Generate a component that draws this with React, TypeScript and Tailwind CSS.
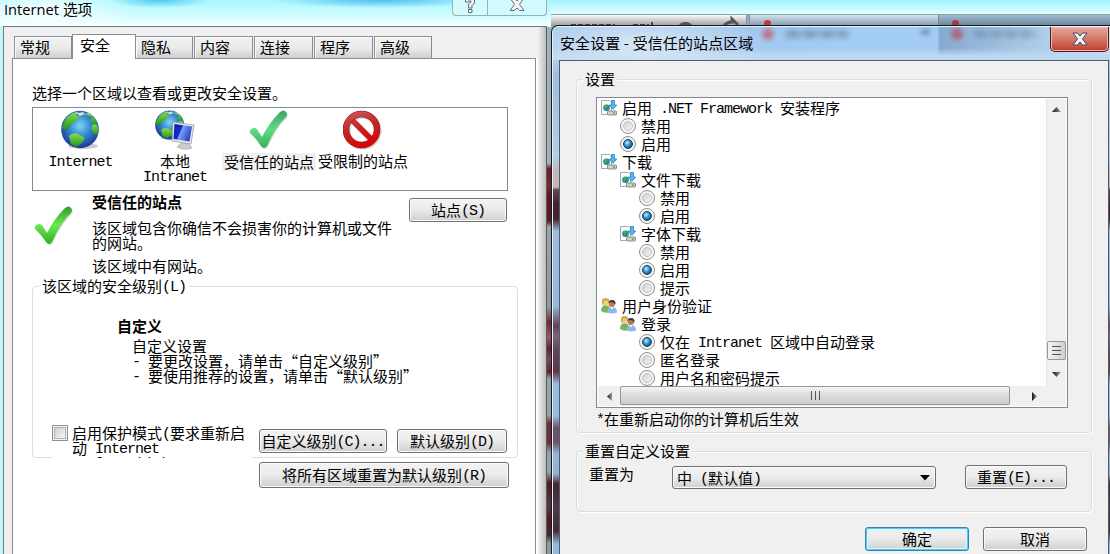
import type { ReactNode } from "react"

const CJK = "font-['Noto_Sans_CJK_SC','Liberation_Sans',sans-serif]"

// Half width characters sit in an 8px cell, full width ones in a 15px cell.
function T({ children }: { children: string }) {
    const parts = children.match(/[\x20-\x7e]+|[^\x20-\x7e]+/g) ?? []
    return (
        <>
            {parts.map((part, i) =>
                /^[\x20-\x7e]/.test(part) ? (
                    <span key={i} className="whitespace-pre align-[1px] font-['Liberation_Mono',monospace] text-[15px] leading-[11px] tracking-[-1px]">{part}</span>
                ) : (
                    <span key={i}>{part}</span>
                )
            )}
        </>
    )
}

function Line({ children, className = "" }: { children: string; className?: string }) {
    return <div className={`h-[15px] shrink-0 whitespace-nowrap leading-[13px] ${className}`}><T>{children}</T></div>
}

function Button({ children, className = "", primary = false }: { children: string; className?: string; primary?: boolean }) {
    return (
        <button
            className={`flex shrink-0 items-center justify-center whitespace-nowrap rounded-[3px] border bg-linear-to-b from-[#f3f3f3] from-0% via-[#ebebeb] via-48% to-[#cfcfcf] pb-px leading-[15px] ${
                primary
                    ? "border-[#3c7fb1] shadow-[inset_0_0_0_1px_#47d0f5,inset_0_0_0_2px_#d8f3fa]"
                    : "border-[#707070] shadow-[inset_0_0_0_1px_#fbfbfb]"
            } ${className}`}>
            <span><T>{children}</T></span>
        </button>
    )
}

function Defs() {
    return (
        <svg width="0" height="0" className="absolute">
            <defs>
                <radialGradient id="sea" cx="0.5" cy="0.4" r="0.6">
                    <stop offset="0" stopColor="#7fd4f4" />
                    <stop offset="0.5" stopColor="#2f86cf" />
                    <stop offset="1" stopColor="#1c3393" />
                </radialGradient>
                <linearGradient id="land" x1="0" y1="0" x2="0" y2="1">
                    <stop offset="0" stopColor="#8edb4a" />
                    <stop offset="1" stopColor="#1c9420" />
                </linearGradient>
                <linearGradient id="screen" x1="0" y1="0" x2="1" y2="0.4">
                    <stop offset="0" stopColor="#0a1fa0" />
                    <stop offset="0.45" stopColor="#1430d0" />
                    <stop offset="0.5" stopColor="#7f9ff5" />
                    <stop offset="1" stopColor="#2b4ad0" />
                </linearGradient>
                <linearGradient id="tick" x1="0" y1="0" x2="0" y2="1">
                    <stop offset="0" stopColor="#2f9e2a" />
                    <stop offset="0.5" stopColor="#6be94f" />
                    <stop offset="1" stopColor="#2fae25" />
                </linearGradient>
                <linearGradient id="tickSelected" x1="0" y1="0" x2="0" y2="1">
                    <stop offset="0" stopColor="#3aa565" />
                    <stop offset="0.5" stopColor="#62da86" />
                    <stop offset="1" stopColor="#36b058" />
                </linearGradient>
                <linearGradient id="stop" gradientUnits="userSpaceOnUse" x1="10" y1="0" x2="22" y2="38">
                    <stop offset="0" stopColor="#cc5858" />
                    <stop offset="0.5" stopColor="#c42222" />
                    <stop offset="1" stopColor="#e00000" />
                </linearGradient>
                <linearGradient id="arrow" x1="0" y1="0" x2="1" y2="0">
                    <stop offset="0" stopColor="#101010" />
                    <stop offset="1" stopColor="#a0a0a0" />
                </linearGradient>
            </defs>
        </svg>
    )
}

function Globe() {
    return (
        <g>
            <ellipse cx="22" cy="36" rx="15" ry="3" fill="#000" opacity="0.2" />
            <circle cx="19" cy="19.5" r="18.8" fill="url(#sea)" />
            <g fill="url(#land)">
                <path d="M3 12 6 7l6-4 5-1-2 3 3 2-4 5-4 2-3 5-3 1-3-2z" />
                <path d="M8 26q4-4 9-2l7 4-3 5-6 4-5-3z" />
                <path d="m23 4 5-1 6 6 3 6-4-1-4-3 2-4z" />
                <path d="m32 14 4 1 1.500 6-2 4-3-1-2-5z" />
            </g>
            <path d="m14 2 4 1 4-1 2 2-5 2z" fill="#e6f4df" opacity="0.85" />
        </g>
    )
}

function ZoneIcon({ kind }: { kind: string }) {
    return (
        <svg width="40" height="40" viewBox="0 0 40 40" className="shrink-0">
            {kind === "internet" && <Globe />}
            {kind === "intranet" && (
                <>
                    <g transform="scale(0.77)"><Globe /></g>
                    <path d="m26 33 8 1 3 4q-8 3-15-1z" fill="#c9ccd0" stroke="#9a9da1" strokeWidth="0.5" />
                    <path d="m18 12 21 3-3 19-19-3z" fill="#e8e8e8" stroke="#9c9c9c" strokeWidth="0.8" />
                    <path d="m19.500 14 17.500 2.500-2.500 15-16-2.500z" fill="url(#screen)" />
                </>
            )}
            {kind === "stop" && (
                <>
                    <circle cx="19.500" cy="20.500" r="15.500" fill="none" stroke="#000" strokeOpacity="0.2" strokeWidth="7" />
                    <path d="m8 9 21 21" stroke="url(#stop)" strokeWidth="6" />
                    <circle cx="18.500" cy="19.500" r="15.500" fill="none" stroke="#8e1616" strokeWidth="6.500" />
                    <circle cx="18.500" cy="19.500" r="15.500" fill="none" stroke="url(#stop)" strokeWidth="5.500" />
                </>
            )}
        </svg>
    )
}

function Check({ selected = false }: { selected?: boolean }) {
    const d = "M1 23q-1-4 4-5 3 0 4 3l4 6Q20 13 31 2q4-3 6 0 2 2 0 5-10 9-19 29-3 4-6 0Q6 27 1 23z"
    return (
        <svg width="40" height="40" viewBox="0 0 40 40" className="shrink-0">
            <path d={d} fill="#000" opacity="0.15" transform="translate(0.8 1)" />
            <path d={d} fill={selected ? "url(#tickSelected)" : "url(#tick)"} />
        </svg>
    )
}

function DownloadIcon() {
    return (
        <svg width="16" height="16" viewBox="0 0 16 16" className="shrink-0">
            <path d="M.5.500h8l2 2v12H.500z" fill="#fff" stroke="#a9a9a9" />
            <circle cx="5.500" cy="7.800" r="3.300" fill="#2377c4" />
            <path d="M3 5.800 6 4.500l1 2-2 2 1 2-2-1zM7 8l2-1-1 3z" fill="#45b635" />
            <path d="M10.500.500h3V5h2.300L12 9.300 8.200 5h2.300z" fill="#55b9f0" stroke="#1b76bd" strokeWidth="0.7" />
            <rect x="6.500" y="11" width="9" height="4" rx="1" fill="#d0d0d0" stroke="#777" strokeWidth="0.8" />
            <path d="M12 13.200h2" stroke="#2fae25" strokeWidth="1.200" />
        </svg>
    )
}

function UsersIcon() {
    return (
        <svg width="16" height="16" viewBox="0 0 16 16" className="shrink-0">
            <path d="M0 13q0-5 4-6l4 1 1 6q-5 2-9-1z" fill="#7ab55c" />
            <circle cx="4.500" cy="4.200" r="3.200" fill="#efc99a" />
            <path d="M1 5Q0 0 4.500 0 9 0 8 4 5 1.500 3 3 3 6 1 7z" fill="#cfae45" />
            <path d="M6.500 14.500q0-5 4.500-5.500 5 0 5 5.500-5 2-9.500 0z" fill="#8db9ea" />
            <path d="m9.500 9 1.500 2.500L12.500 9z" fill="#fff" />
            <circle cx="10.800" cy="5.800" r="3.200" fill="#b9794a" />
            <path d="M7.500 5Q7.500 2 11 2q4 0 3.500 4.500Q13 4 10.500 4 8.500 4 7.500 5z" fill="#3d3530" />
        </svg>
    )
}

function Radio({ on = false }: { on?: boolean }) {
    return (
        <span className="flex size-4 shrink-0 items-center justify-center rounded-full border border-[#8e8f8f] bg-[#f6f6f6]">
            {on ? (
                <span className="size-2.5 rounded-full border border-[#173a5c] bg-radial-[at_40%_35%] from-[#c5f1ff] via-[#2590cb] via-45% to-[#0b3d66]" />
            ) : (
                <span className="size-2.5 rounded-full border border-[#c0c3c7] bg-linear-to-br from-[#cdd0d4] to-[#f6f6f6]" />
            )}
        </span>
    )
}

type Row = { depth: number; icon: "download" | "users" | "on" | "off"; label: string }

const rows: Row[] = [
    { depth: 0, icon: "download", label: "启用 .NET Framework 安装程序" },
    { depth: 1, icon: "off", label: "禁用" },
    { depth: 1, icon: "on", label: "启用" },
    { depth: 0, icon: "download", label: "下载" },
    { depth: 1, icon: "download", label: "文件下载" },
    { depth: 2, icon: "off", label: "禁用" },
    { depth: 2, icon: "on", label: "启用" },
    { depth: 1, icon: "download", label: "字体下载" },
    { depth: 2, icon: "off", label: "禁用" },
    { depth: 2, icon: "on", label: "启用" },
    { depth: 2, icon: "off", label: "提示" },
    { depth: 0, icon: "users", label: "用户身份验证" },
    { depth: 1, icon: "users", label: "登录" },
    { depth: 2, icon: "on", label: "仅在 Intranet 区域中自动登录" },
    { depth: 2, icon: "off", label: "匿名登录" },
    { depth: 2, icon: "off", label: "用户名和密码提示" },
]

const indents = ["pl-[3px]", "pl-[22px]", "pl-[41px]"]

function SettingRow({ depth, icon, label }: Row) {
    return (
        <div className={`flex h-[18px] shrink-0 items-center gap-[5px] ${indents[depth]}`}>
            {icon === "download" && <DownloadIcon />}
            {icon === "users" && <UsersIcon />}
            {icon === "on" && <Radio on />}
            {icon === "off" && <Radio />}
            <Line>{label}</Line>
        </div>
    )
}

function Arrow({ d, className = "" }: { d: string; className?: string }) {
    return (
        <svg width="9" height="9" viewBox="0 0 9 9" className={`shrink-0 ${className}`}>
            <path d={d} fill="url(#arrow)" />
        </svg>
    )
}

function Tab({ children, className = "" }: { children: ReactNode; className?: string }) {
    return (
        <div className={`h-[22px] shrink-0 border border-b-0 border-[#898c95] bg-linear-to-b from-[#f2f2f2] from-0% via-[#ebebeb] via-50% to-[#cfcfcf] pl-[5px] pt-[3px] leading-[13px] shadow-[inset_1px_1px_0_#fcfcfc] ${className}`}>
            {children}
        </div>
    )
}

function InternetOptions() {
    return (
        <div className="absolute left-0 top-0 flex h-[554px] w-[551px] flex-col overflow-hidden bg-linear-to-r from-[#c5f4fb] via-[#b9fbff] to-[#e9ffff]">
            <div className="flex h-[26px] shrink-0 justify-between bg-[radial-gradient(ellipse_90px_26px_at_45px_10px,#ffffffe0,#ffffff00),radial-gradient(ellipse_50px_8px_at_160px_0px,#4fc8ef,#4fc8ef00),radial-gradient(ellipse_110px_8px_at_380px_0px,#50bdf2,#50cdf200),linear-gradient(#a9f7fe,#c9fcff_50%,#f4ffff)] pl-1">
                <div className="h-5 font-['Open_Sans','Noto_Sans_CJK_SC',sans-serif] text-[14.7px] leading-[19px]">Internet 选项</div>
                <div className="mr-[4px] flex h-[16px] w-[95px] overflow-hidden rounded-b-[4px] border border-t-0 border-[#8fb3b8] bg-[#d3fafd]">
                    <div className="flex w-[35px] justify-center border-r border-[#8fb3b8]">
                        <svg width="14" height="14" viewBox="0 0 14 14">
                            <path d="M2.500 2V-2h9v5L9 5.500V8H5.500V4L8 2V1H5.500v1z" fill="#f4f4f4" stroke="#666b78" />
                            <path d="M5.500 9.500H9v3H5.500z" fill="#f4f4f4" stroke="#666b78" />
                        </svg>
                    </div>
                    <div className="flex flex-1 justify-center">
                        <svg width="18" height="14" viewBox="0 0 18 14">
                            <path d="M2-2h4.500L9 1l2.500-3H16L11.500 4.500l4.500 6h-4.500L9 8l-2.500 2.500H2l4.500-6z" fill="#f4f4f4" stroke="#666b78" />
                        </svg>
                    </div>
                </div>
            </div>
            <div className="ml-[3px] flex w-[544px] flex-1 flex-col border border-b-0 border-[#6d7b80] bg-[#f0f0f0] pl-2 pt-2">
                <div className="flex h-[23px] items-end pl-[2px]">
                    <Tab className="w-[58px]"><T>常规</T></Tab>
                    <div className="z-10 -mb-px h-[25px] w-[64px] shrink-0 border border-b-0 border-[#898c95] bg-white pl-[7px] pt-[3px] leading-[14px]">安全</div>
                    <Tab className="w-[57px] border-l-0"><T>隐私</T></Tab>
                    <Tab className="ml-px w-[59px]"><T>内容</T></Tab>
                    <Tab className="ml-px w-[59px]"><T>连接</T></Tab>
                    <Tab className="ml-px w-[59px]"><T>程序</T></Tab>
                    <Tab className="ml-px w-[58px]"><T>高级</T></Tab>
                </div>
                <div className="flex w-[524px] flex-1 flex-col border border-b-0 border-[#898c95] bg-white pl-[19px] pt-[27px] shadow-[2px_0_0_#fff]">
                    <Line>选择一个区域以查看或更改安全设置。</Line>
                    <div className="mt-[6px] flex h-[84px] w-[476px] shrink-0 items-start border border-[#828790] pt-[2px] text-center">
                        <div className="flex w-[95px] flex-col items-center">
                            <ZoneIcon kind="internet" />
                            <Line className="mt-[4px]">Internet</Line>
                        </div>
                        <div className="flex w-[94px] flex-col items-center">
                            <ZoneIcon kind="intranet" />
                            <Line className="mt-[4px]">本地</Line>
                            <Line>Intranet</Line>
                        </div>
                        <div className="flex w-[94px] flex-col items-center">
                            <Check selected />
                            <div className="mt-[3px] flex h-[18px] w-[94px] items-center justify-center bg-[#f0f0f0]"><Line>受信任的站点</Line></div>
                        </div>
                        <div className="flex w-[94px] flex-col items-center">
                            <ZoneIcon kind="stop" />
                            <Line className="mt-[4px]">受限制的站点</Line>
                        </div>
                    </div>
                    <div className="flex h-[83px] shrink-0">
                        <div className="ml-[2px] mt-[15px] w-[58px]"><Check /></div>
                        <div className="flex w-[317px] flex-col pt-1">
                            <Line className="font-bold">受信任的站点</Line>
                            <Line className="mt-[11px]">该区域包含你确信不会损害你的计算机或文件</Line>
                            <Line>的网站。</Line>
                            <Line className="mt-2">该区域中有网站。</Line>
                        </div>
                        <Button className="mt-[7px] h-6 w-[98px]">站点(S)</Button>
                    </div>
                    <fieldset className="mt-[5px] h-[179px] w-[486px] shrink-0 rounded-[4px] border border-[#d5dfe5]">
                        <legend className="ml-[6px] h-[15px] px-[3px] leading-[13px]"><T>该区域的安全级别(L)</T></legend>
                        <div className="flex flex-col pl-[84px] pt-[25px]">
                            <Line className="font-bold">自定义</Line>
                            <div className="mt-[5px] pl-[15px]">
                                <Line>自定义设置</Line>
                                <Line>- 要更改设置，请单击“自定义级别”</Line>
                                <Line>- 要使用推荐的设置，请单击“默认级别”</Line>
                            </div>
                        </div>
                        <div className="flex pl-[19px] pt-[41px]">
                            <div className="flex h-[33px] w-[200px] gap-1 overflow-hidden bg-white">
                                <span className="flex size-4 shrink-0 items-center justify-center border border-[#8e8f8f] bg-[#f4f4f4]">
                                    <span className="size-3 border border-[#aeb3b9] bg-linear-to-br from-[#cbcfd5] to-[#f6f6f6]" />
                                </span>
                                <div className="pt-px">
                                    <Line>启用保护模式(要求重新启</Line>
                                    <Line>动 Internet</Line>
                                    <Line>Explorer)(P)</Line>
                                </div>
                            </div>
                            <Button className="ml-[7px] mt-1 h-6 w-[128px]">自定义级别(C)...</Button>
                            <Button className="ml-[10px] mt-1 h-6 w-[110px]">默认级别(D)</Button>
                        </div>
                    </fieldset>
                    <Button className="ml-[227px] mt-1 h-[26px] w-[250px]">将所有区域重置为默认级别(R)</Button>
                </div>
            </div>
            {/* shadow cast by the dialog on the right */}
            <div className="absolute right-0 top-[27px] h-[527px] w-[13px] bg-linear-to-r from-transparent to-black/35" />
            <div className="absolute right-0 top-[27px] h-[527px] w-[4px] bg-[linear-gradient(#9fb4b8_0,#a5b0b4_136px,#650c10_142px,#75181c_160px,#550709_168px,#550709_194px,#9ca3a6_200px,#8c9498_280px,#701820_295px,#905058_310px,#601018_322px,#704048_332px,#601018_345px,#95a0a5_352px,#95a0a5_388px,#6a2028_396px,#6a2028_416px,#95a0a5_426px,#95a0a5_445px,#520608_456px,#403038_480px,#520608_490px,#3a1518_508px,#8c9498_516px)] opacity-90" />
        </div>
    )
}

function SecuritySettings() {
    return (
        <div className="absolute left-[551px] top-[25px] h-[529px] w-[559px] overflow-hidden rounded-tl-[7px] border border-b-0 border-r-0 border-[#15181d] bg-[linear-gradient(#b7d1ec_0,#b2cbe6_36px,#9fbedb_50px,#b5cde6_130px,#c5b4bd_144px,#c9b3b5_161px,#604554_164px,#47222e_178px,#47222e_193px,#9dbcdf_205px,#98b7db_280px,#684050_300px,#806478_310px,#624552_325px,#62354a_346px,#9ab9de_358px,#9ab9de_390px,#6d5365_402px,#6d5365_416px,#97b6da_428px,#94b0d2_448px,#452530_458px,#503848_482px,#452a38_505px,#97b8df_518px)] shadow-[inset_1px_1px_0_#e5f2ff]">
            <div className="flex h-[34px] items-start justify-between bg-[radial-gradient(ellipse_130px_30px_at_90px_18px,#dce9f6,#dce9f600),linear-gradient(#c9e0f700_22px,#bfd8f2_30px),linear-gradient(90deg,#a9c9eb,#a0c6ee_35%,#a3cdf5_50%,#a3cdf5_69%,#86aace_69.5%,#a8c8e6_85%,#cfe0f2)] bg-clip-content pl-px pt-px">
                <div className={`whitespace-pre pl-[7px] pt-[6px] leading-5 tracking-[0.1px] ${CJK}`}>安全设置 - 受信任的站点区域</div>
                <div className="relative flex gap-[14px]">
                    {/* blurred tabs seen through the glass */}
                    <svg width="350" height="31" viewBox="0 0 350 31" className="absolute -left-[350px] top-0">
                        <g opacity="0.7">
                            <circle cx="68" cy="7" r="6" fill="#c15c69" className="blur-[2px]" />
                            <path d="M86 7h62" stroke="#5d7488" strokeWidth="6" strokeDasharray="14 3" className="blur-[3px]" />
                            <path d="M221 5h9" stroke="#6b8499" strokeWidth="6" className="blur-[2px]" />
                            <circle cx="257" cy="7" r="6" fill="#b05060" className="blur-[2px]" />
                            <path d="M275 7h62" stroke="#68829c" strokeWidth="6" strokeDasharray="12 3" className="blur-[3px]" />
                        </g>
                    </svg>
                    <button className="mr-px flex h-[25px] w-[59px] items-center justify-center rounded-b-[5px] border border-t-0 border-[#4d1a1a] bg-linear-to-b from-[#e5a99d] from-0% via-[#d2796b] via-48% to-[#c03a24] shadow-[inset_0_0_0_1px_#efb9ae]">
                        <svg width="16" height="14" viewBox="0 0 16 14">
                            <path d="M1 1h4.500L8 4l2.500-3H15L10.500 7l4.500 6h-4.500L8 10l-2.500 3H1l4.500-6z" fill="#f5f5f5" stroke="#444a63" />
                        </svg>
                    </button>
                </div>
            </div>
            <div className="ml-[7px] h-[495px] w-[550px] border border-b-0 border-[#4b5c6e] bg-[#f0f0f0] pl-4 pt-[11px]">
                <fieldset className="h-[361px] w-[516px] rounded-[4px] border border-[#d5dfe5] shadow-[inset_1px_1px_0_#fff,1px_1px_0_#fff]">
                    <legend className="ml-[6px] h-[15px] bg-[#f0f0f0] px-[2px] leading-[14px]">设置</legend>
                    <div className="ml-[19px] mt-[10px] flex h-[311px] w-[472px] flex-col border border-[#828790] bg-white p-px">
                        <div className="flex h-[287px] shrink-0">
                            <div className="flex-1 overflow-hidden">
                                {rows.map((row, i) => <SettingRow key={i} {...row} />)}
                            </div>
                            <div className="flex w-[20px] shrink-0 flex-col items-center border-l border-[#e6e6e6] bg-[#f0f0f0]">
                                <Arrow d="M0 7 4.500 2 9 7z" className="mt-[6px]" />
                                <div className="mt-[227px] flex h-[19px] w-[19px] shrink-0 flex-col items-center justify-center gap-[3px] rounded-[2px] border border-[#979797] bg-linear-to-r from-[#f5f5f5] to-[#cfcfcf]">
                                    <span className="h-px w-[9px] bg-[#555]" />
                                    <span className="h-px w-[9px] bg-[#555]" />
                                    <span className="h-px w-[9px] bg-[#555]" />
                                </div>
                                <Arrow d="M0 2 4.500 7 9 2z" className="mt-[10px]" />
                            </div>
                        </div>
                        <div className="flex h-5 shrink-0 bg-[#f0f0f0]">
                            <div className="flex w-[22px] items-center justify-center"><Arrow d="M7 0 2 4.500 7 9z" /></div>
                            <div className="flex h-[19px] w-[390px] items-center justify-center gap-[3px] rounded-[2px] border border-[#979797] bg-linear-to-b from-[#f5f5f5] via-[#dcdcdc] to-[#cdcdd0]">
                                <span className="h-[9px] w-px bg-[#555]" />
                                <span className="h-[9px] w-px bg-[#555]" />
                                <span className="h-[9px] w-px bg-[#555]" />
                            </div>
                            <div className="flex w-12 items-center justify-center"><Arrow d="M2 0 7 4.500 2 9z" /></div>
                        </div>
                    </div>
                    <Line className="ml-[19px] mt-1">*在重新启动你的计算机后生效</Line>
                </fieldset>
                <fieldset className="mt-[11px] h-[68px] w-[516px] rounded-[4px] border border-[#d5dfe5] shadow-[inset_1px_1px_0_#fff,1px_1px_0_#fff]">
                    <legend className="ml-[6px] h-[15px] bg-[#f0f0f0] px-[2px] leading-[13px]">重置自定义设置</legend>
                    <div className="flex items-start pl-[12px] pt-[6px]">
                        <Line className="mt-[2px] w-[83px]">重置为</Line>
                        <button className="mt-px flex h-[23px] w-[264px] items-center justify-between rounded-[3px] border border-[#707070] bg-linear-to-b from-[#f3f3f3] via-[#ebebeb] to-[#cfcfcf] pl-1 pr-[5px] leading-[13px] shadow-[inset_0_0_0_1px_#fbfbfb]">
                            <span><T>中 (默认值)</T></span>
                            <svg width="10" height="6" viewBox="0 0 10 6"><path d="M0 0h10L5 5.500z" fill="#000" /></svg>
                        </button>
                        <Button className="ml-[29px] h-6 w-[102px]">重置(E)...</Button>
                    </div>
                </fieldset>
                <div className="mt-[15px] flex gap-[14px] pl-[289px]">
                    <Button primary className="h-6 w-[104px]">确定</Button>
                    <Button className="h-6 w-[104px]">取消</Button>
                </div>
            </div>
        </div>
    )
}

// The browser window that shows above the dialogs
function Browser() {
    return (
        <div className="flex h-[120px] flex-col pl-[551px]">
            <div className="h-[14px] shrink-0 bg-linear-to-b from-[#a0f2ff] to-[#dfffff]" />
            <div className="flex h-3 shrink-0 overflow-hidden border-t border-[#91a3a8] bg-[#8fb0c8]">
                <div className="flex h-3 w-[196px] items-start border-r border-[#848e98] bg-linear-to-b from-[#fafafa] to-[#959595] pl-5">
                    <svg width="170" height="12" viewBox="0 0 170 12">
                        <path d="M0 10h44M62 10h16M81 7v4" stroke="#444" strokeWidth="2" strokeDasharray="5 2" />
                        <path d="M108 13a7 7 0 0 1 13 0M152 13q2-6 9-6V4l6 6" fill="none" stroke="#555" strokeWidth="3" />
                    </svg>
                </div>
                <div className="ml-[2px] flex w-[189px] justify-start border-l border-[#848e98] bg-linear-to-b from-[#d4e2ef] to-[#809aae] pl-[14px] pt-[5px]">
                    <span className="size-[7px] rounded-full bg-[#c23939]" />
                </div>
                <div className="flex flex-1 justify-start border-l border-[#76889a] bg-linear-to-b from-[#9dbad0] to-[#6b8497] pl-[13px] pt-[5px]">
                    <span className="size-[7px] rounded-full bg-[#a83740]" />
                </div>
            </div>
        </div>
    )
}

export default function App() {
    return (
        <div className={`relative h-[554px] w-[1110px] overflow-hidden bg-[#8fafc8] text-[15px] leading-[15px] text-black ${CJK}`}>
            <Defs />
            <Browser />
            <InternetOptions />
            <SecuritySettings />
        </div>
    )
}
